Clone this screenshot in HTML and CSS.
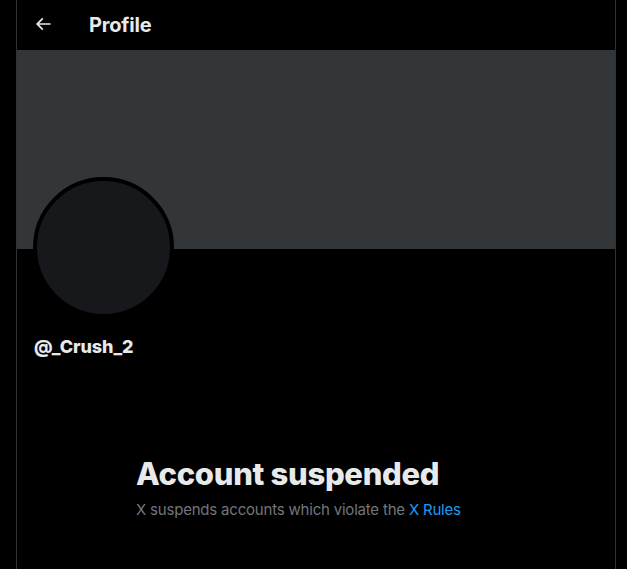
FILE: index.html
```html
<!DOCTYPE html>
<html>
<head>
<meta charset="utf-8">
<link rel="stylesheet" href="styles.css">
</head>
<body>
<main class="column">
  <header class="topbar">
    <div class="back">
      <svg viewBox="0 0 24 24" width="20" height="20"><path fill="#e7e9ea" d="M7.414 13l5.043 5.04-1.414 1.42L3.586 12l7.457-7.46 1.414 1.42L7.414 11H21v2H7.414z"/></svg>
    </div>
    <h1 class="title">Profile</h1>
  </header>
  <div class="banner"></div>
  <div class="info">
    <div class="avatar"></div>
    <div class="handle">@_Crush_2</div>
  </div>
  <section class="empty">
    <h2 class="empty-title">Account suspended</h2>
    <p class="empty-text">X suspends accounts which violate the <a class="link" href="#">X Rules</a></p>
  </section>
</main>
</body>
</html>
```

FILE: styles.css
```css
html, body {
  margin: 0;
  padding: 0;
  background: #000;
  height: 100%;
}
body {
  font-family: Inter, "Noto Sans", sans-serif;
  color: #e7e9ea;
}
.column {
  box-sizing: border-box;
  width: 600px;
  margin-left: 16px;
  min-height: 100%;
  border-left: 1px solid #2f3336;
  border-right: 1px solid #2f3336;
}
.topbar {
  height: 50px;
  display: flex;
  align-items: center;
  padding: 0 16px;
}
.back {
  width: 20px;
  height: 20px;
  display: flex;
  margin-right: 36px;
  margin-top: -2px;
}
.title {
  margin: 0;
  font-size: 20px;
  font-weight: 700;
  letter-spacing: -0.2px;
}
.banner {
  height: 199px;
  background: #333639;
}
.info {
  padding: 0 16px;
}
.avatar {
  box-sizing: border-box;
  width: 141px;
  height: 141px;
  margin-top: -72px;
  border-radius: 50%;
  border: 4px solid #000;
  background: #16181c;
}
.handle {
  margin-top: 18px;
  margin-left: 1px;
  font-size: 18px;
  font-weight: 800;
  line-height: 22px;
  letter-spacing: -0.1px;
}
.empty {
  box-sizing: border-box;
  width: 400px;
  margin: 98px auto 0;
  padding: 0 20px;
}
.empty-title {
  margin: 0;
  font-size: 31px;
  font-weight: 800;
  line-height: 36px;
  letter-spacing: -0.3px;
}
.empty-text {
  margin: 8px 0 0;
  font-size: 15px;
  line-height: 20px;
  color: #71767b;
  letter-spacing: -0.2px;
}
.link {
  color: #1d9bf0;
  text-decoration: none;
}
```
